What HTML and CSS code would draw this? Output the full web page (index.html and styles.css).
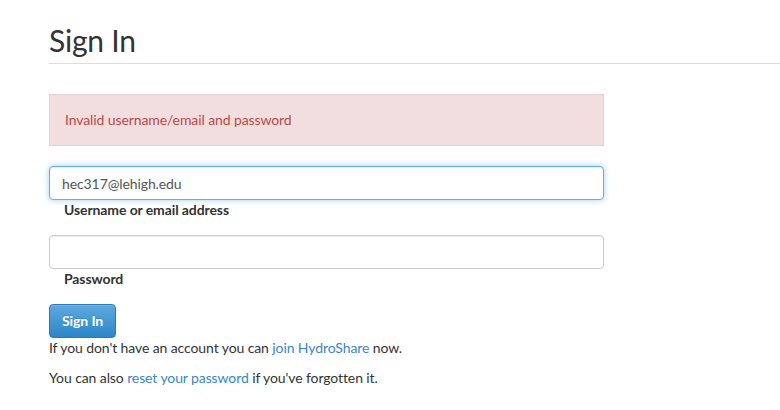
FILE: index.html
```html
<!DOCTYPE html>
<html lang="en">
<head>
<meta charset="utf-8">
<title>Sign In</title>
<link rel="stylesheet" href="styles.css">
</head>
<body>
<div class="page">
  <h1 class="page-title">Sign In</h1>
  <div class="content">
    <div class="alert">Invalid username/email and password</div>
    <form class="form">
      <div class="field">
        <input class="input input-focus" type="text" value="hec317@lehigh.edu">
        <label class="label">Username or email address</label>
      </div>
      <div class="field">
        <input class="input" type="password" value="">
        <label class="label">Password</label>
      </div>
      <button class="btn" type="button">Sign In</button>
    </form>
    <p class="note">If you don't have an account you can <a href="#">join HydroShare</a> now.</p>
    <p class="note">You can also <a href="#">reset your password</a> if you've forgotten it.</p>
  </div>
</div>
</body>
</html>
```
FILE: styles.css
```css
html, body {
  margin: 0;
  padding: 0;
  background: #fff;
}
body {
  font-family: Lato, "Open Sans", sans-serif;
  font-size: 14px;
  line-height: 20px;
  letter-spacing: -0.1px;
  color: #333;
}
.page {
  padding: 24px 0 0 49px;
}
.page-title {
  margin: 0;
  font-size: 30px;
  line-height: 33px;
  font-weight: 400;
  letter-spacing: -0.2px;
  color: #333;
  padding-bottom: 6px;
  border-bottom: 1px solid #dddddd;
}
.content {
  width: 555px;
  padding-top: 30px;
}
.alert {
  background: #f2dede;
  border: 1px solid #ebccd1;
  color: #b94a48;
  padding: 15px;
  margin-bottom: 20px;
}
.form {
  display: flex;
  flex-direction: column;
  align-items: flex-start;
}
.field {
  width: 100%;
  margin-bottom: 15px;
}
.input {
  display: block;
  box-sizing: border-box;
  width: 100%;
  height: 34px;
  margin: 0;
  padding: 6px 12px;
  font-family: Lato, "Open Sans", sans-serif;
  font-size: 14px;
  letter-spacing: -0.1px;
  color: #555;
  background: #fff;
  border: 1px solid #ccc;
  border-radius: 4px;
  box-shadow: inset 0 1px 1px rgba(0,0,0,.075);
  outline: none;
}
.input-focus {
  border-color: #66afe9;
  box-shadow: inset 0 1px 1px rgba(0,0,0,.075), 0 0 6px rgba(102,175,233,.6);
}
.label {
  display: block;
  margin-left: 15px;
  font-weight: 700;
  color: #333;
}
.btn {
  box-sizing: border-box;
  height: 34px;
  padding: 6px 12px;
  font-family: Lato, "Open Sans", sans-serif;
  font-size: 14px;
  font-weight: 700;
  line-height: 20px;
  letter-spacing: -0.1px;
  color: #fff;
  border: 1px solid #2a7ab8;
  border-radius: 4px;
  background: linear-gradient(to bottom, #5ea9df 0%, #2d86c8 100%);
  box-shadow: inset 0 1px 0 rgba(255,255,255,.15);
  text-shadow: 0 -1px 0 rgba(0,0,0,.15);
}
.note {
  margin: 0 0 10px;
  white-space: nowrap;
}
.note a {
  color: #3a87c4;
  text-decoration: none;
}
```
